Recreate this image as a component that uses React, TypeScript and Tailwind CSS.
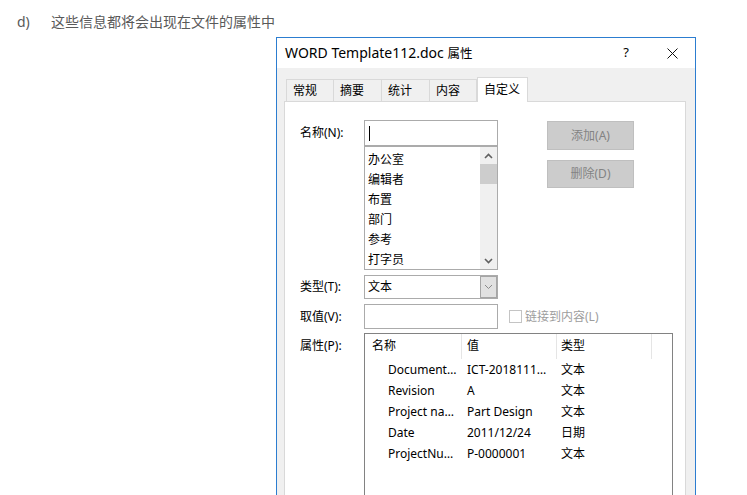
import React from "react";

const tabs = [
  { t: "常规", w: "w-[47px]" },
  { t: "摘要", w: "w-[48px]" },
  { t: "统计", w: "w-[48px]" },
];

const items = ["办公室", "编辑者", "布置", "部门", "参考", "打字员"];

const rows = [
  ["Document…", "ICT-2018111…", "文本"],
  ["Revision", "A", "文本"],
  ["Project na…", "Part Design", "文本"],
  ["Date", "2011/12/24", "日期"],
  ["ProjectNu…", "P-0000001", "文本"],
];

function ChevronUp() {
  return (
    <svg width="9" height="6" viewBox="0 0 9 6">
      <path d="M1 5 L4.5 1.5 L8 5" fill="none" stroke="#606060" strokeWidth="1.6" />
    </svg>
  );
}
function ChevronDown({ color = "#606060", w = 1.6 }: { color?: string; w?: number }) {
  return (
    <svg width="9" height="6" viewBox="0 0 9 6">
      <path d="M1 1 L4.5 4.5 L8 1" fill="none" stroke={color} strokeWidth={w} />
    </svg>
  );
}

export default function App() {
  return (
    <div className="w-[747px] h-[495px] overflow-hidden bg-white font-['Noto_Sans','Noto_Sans_CJK_SC',sans-serif] text-black">
      <div className="h-[37px] pt-[13px] flex text-[14px] leading-[18px] text-[#595959]">
        <span className="pl-[17px] w-[51px]">d)</span>
        <span>这些信息都将会出现在文件的属性中</span>
      </div>

      <div className="ml-[276px] w-[420px] h-[470px] border border-[#2c7dd0] flex flex-col">
        <div className="h-[30px] bg-white flex items-center shrink-0">
          <span className="pl-[8px] text-[14px] leading-[18px]">
            WORD Template112.doc <span className="text-[12.5px]">属性</span>
          </span>
          <div className="ml-auto flex h-full">
            <div className="w-[46px] flex items-center justify-center text-[13px]">?</div>
            <div className="w-[46px] flex items-center justify-center">
              <svg width="11" height="11" viewBox="0 0 11 11">
                <path d="M0.5 0.5 L10.5 10.5 M10.5 0.5 L0.5 10.5" stroke="#111" strokeWidth="1" />
              </svg>
            </div>
          </div>
        </div>

        <div className="flex-1 bg-[#f0f0f0] pt-[9px] pl-[7px] pr-[9px] flex flex-col">
          <div className="flex h-[24px] items-end pl-[2px] text-[12px] shrink-0">
            {tabs.map((tb) => (
              <div
                key={tb.t}
                className={`${tb.w} h-[22px] border-l border-t border-[#d9d9d9] pl-[6px] leading-[22px]`}
              >
                {tb.t}
              </div>
            ))}
            <div className="w-[48px] h-[22px] border-l border-t border-r border-[#d9d9d9] pl-[6px] leading-[22px]">
              内容
            </div>
            <div className="relative z-10 w-[51px] h-[25px] -mb-px bg-white border-l border-t border-r border-[#d9d9d9] pl-[6px] leading-[23px]">
              自定义
            </div>
          </div>

          <div className="flex-1 bg-white border border-[#d9d9d9] pl-[15px] pt-[18px] text-[12px]">
            {/* name row */}
            <div className="flex">
              <div className="w-[64px] h-[26px] flex items-center">名称(N):</div>
              <div className="w-[134px] flex flex-col">
                <div className="h-[26px] border border-[#ababab] flex items-center pl-[4px]">
                  <div className="w-px h-[15px] bg-black" />
                </div>
                <div className="h-[124px] border border-[#ababab] flex overflow-hidden">
                  <div className="flex-1 pt-[5px] pl-[3px] flex flex-col gap-[4px]">
                    {items.map((it) => (
                      <div key={it} className="h-[16px] leading-[16px]">
                        {it}
                      </div>
                    ))}
                  </div>
                  <div className="w-[17px] bg-[#f0f0f0] flex flex-col">
                    <div className="h-[17px] flex items-center justify-center">
                      <ChevronUp />
                    </div>
                    <div className="h-[20px] bg-[#cdcdcd]" />
                    <div className="flex-1" />
                    <div className="h-[17px] flex items-center justify-center">
                      <ChevronDown />
                    </div>
                  </div>
                </div>
              </div>
              <div className="ml-[49px] flex flex-col">
                <div className="mt-[1px] w-[87px] h-[29px] bg-[#cccccc] border border-[#bfbfbf] flex items-center justify-center text-[#838383]">
                  添加(A)
                </div>
                <div className="mt-[10px] w-[87px] h-[28px] bg-[#cccccc] border border-[#bfbfbf] flex items-center justify-center text-[#838383]">
                  删除(D)
                </div>
              </div>
            </div>

            {/* type row */}
            <div className="flex mt-[5px]">
              <div className="w-[64px] h-[24px] flex items-center">类型(T):</div>
              <div className="w-[134px] h-[24px] border border-[#ababab] flex">
                <div className="flex-1 pl-[3px] leading-[22px]">文本</div>
                <div className="w-[17px] bg-[#e1e1e1] border border-[#a5a5a5] flex items-center justify-center">
                  <ChevronDown color="#8a8a8a" w={1} />
                </div>
              </div>
            </div>

            {/* value row */}
            <div className="flex mt-[5px] items-center">
              <div className="w-[64px] h-[25px] flex items-center">取值(V):</div>
              <div className="w-[134px] h-[25px] border border-[#ababab]" />
              <div className="ml-[11px] w-[13px] h-[13px] border border-[#c4c4c4]" />
              <div className="ml-[3px] text-[#9d9d9d]">链接到内容(L)</div>
            </div>

            {/* properties row */}
            <div className="flex mt-[4px]">
              <div className="w-[64px] h-[26px] flex items-center">属性(P):</div>
              <div className="w-[309px] h-[200px] border border-[#828282]">
                <div className="flex h-[25px]">
                  <div className="w-[97px] border-r border-[#e5e5e5] pl-[7px] leading-[24px]">名称</div>
                  <div className="w-[95px] border-r border-[#e5e5e5] pl-[5px] leading-[24px]">值</div>
                  <div className="w-[95px] border-r border-[#e5e5e5] pl-[4px] leading-[24px]">类型</div>
                </div>
                {rows.map((r) => (
                  <div key={r[0]} className="flex h-[21px] leading-[21px]">
                    <div className="w-[97px] pl-[23px] whitespace-nowrap overflow-hidden">{r[0]}</div>
                    <div className="w-[95px] pl-[5px] whitespace-nowrap overflow-hidden">{r[1]}</div>
                    <div className="w-[95px] pl-[4px] whitespace-nowrap">{r[2]}</div>
                  </div>
                ))}
              </div>
            </div>
          </div>
        </div>
      </div>
    </div>
  );
}
